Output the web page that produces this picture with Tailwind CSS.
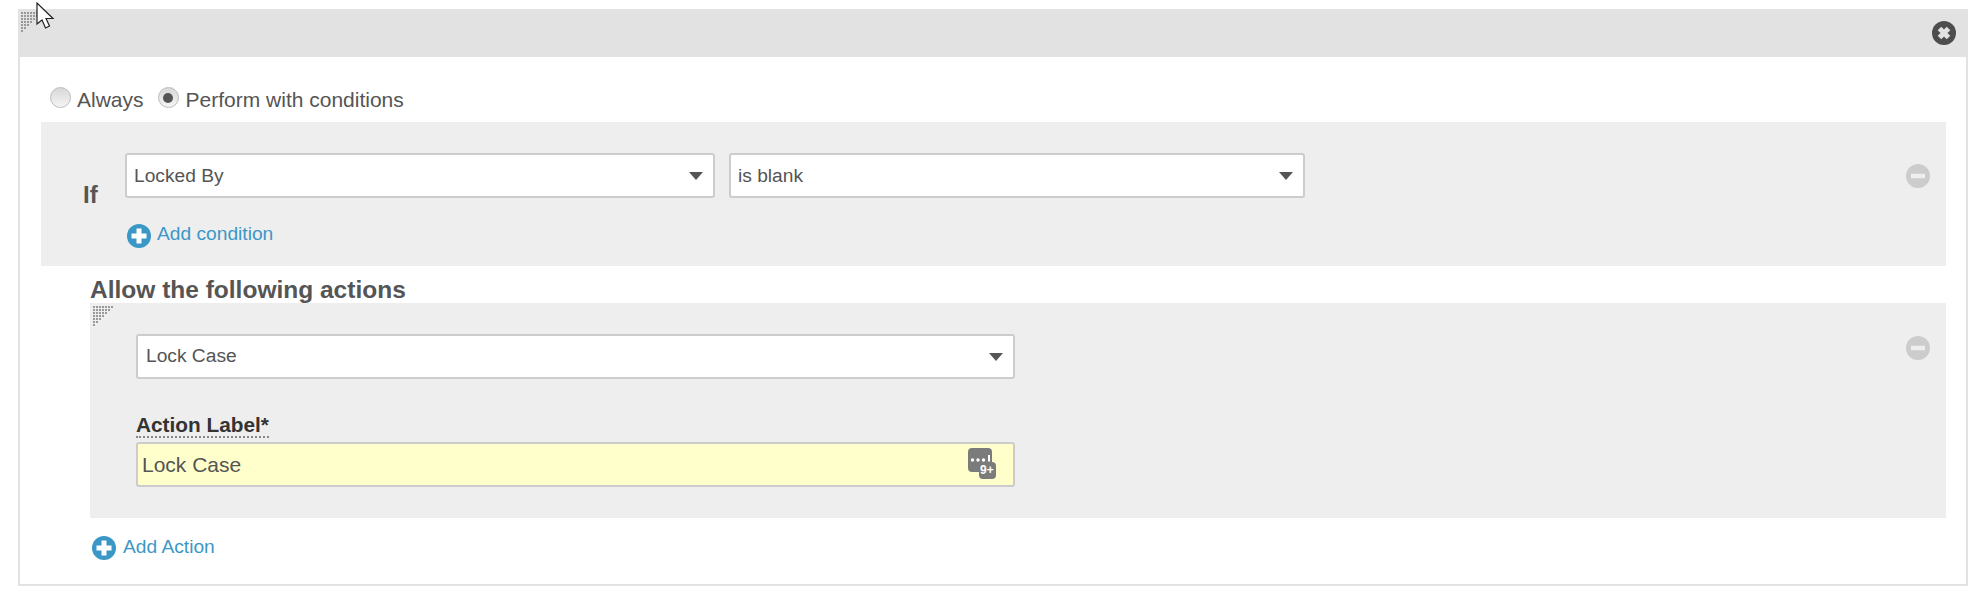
<!DOCTYPE html>
<html lang="en">
<head>
    <meta charset="UTF-8">
    <title>Actions</title>
    <script src="https://cdn.jsdelivr.net/npm/@tailwindcss/browser@4"></script>
</head>
<body class="bg-white font-['Liberation_Sans',Arial,sans-serif] text-[#555]">
    <!-- Cursor -->
    <svg class="absolute left-[36px] top-[2px] z-10" width="19" height="28" viewBox="0 0 19 28">
        <path d="M1 1 L1 22 L6 18 L9.500 26 L13.500 24 L10 16.500 L17 16.500 Z" fill="#fff" stroke="#222" stroke-width="1.200"/>
    </svg>

    <div class="pt-[9px] pl-[18px] w-[1968px]">
        <div class="relative border-2 border-t-0 border-[#e2e2e2] h-[577px]">
            <!-- Header -->
            <div class="relative -mx-[2px] h-[48px] bg-[#e2e2e2] flex items-center justify-end pr-[12px]">
                <svg class="absolute left-[3px] top-[3px]" width="20" height="20" viewBox="0 0 20 20">
                    <g stroke="#999" stroke-width="2" stroke-dasharray="2 1">
                        <path d="M0 1H20M0 4H17M0 7H14M0 10H11M0 13H8M0 16H5M0 19H2"/>
                    </g>
                </svg>
                <svg width="24" height="24" viewBox="0 0 24 24" class="mt-[-1px]">
                    <circle cx="12" cy="12" r="12" fill="#4d4d4d"/>
                    <path d="M7.500 7.500L16.500 16.500M16.500 7.500L7.500 16.500" stroke="#e2e2e2" stroke-width="5"/>
                </svg>
            </div>

            <!-- Radios -->
            <div class="h-[65px] pt-[20px] pl-[30px] flex items-center gap-[10px] text-[21px]">
                <label class="flex items-center gap-[6px]">
                    <span class="w-[21px] h-[21px] rounded-full border border-[#bbb] bg-gradient-to-b from-[#d8d8d8] to-[#f4f4f4] mt-[-4px]"></span>
                    Always
                </label>
                <label class="flex items-center gap-[7px] ml-[4px]">
                    <span class="w-[21px] h-[21px] rounded-full border border-[#bbb] bg-gradient-to-b from-[#d8d8d8] to-[#f4f4f4] mt-[-4px] flex items-center justify-center">
                        <span class="w-[10px] h-[10px] rounded-full bg-[#555]"></span>
                    </span>
                    Perform with conditions
                </label>
            </div>

            <!-- If panel -->
            <div class="relative ml-[21px] mr-[20px] h-[144px] bg-[#eee] flex">
                <div class="w-[84px] pl-[42px] pt-[61px] text-[24px] font-bold leading-none">If</div>
                <div class="pt-[31px]">
                    <div class="flex gap-[14px]">
                        <div class="w-[590px] h-[45px] bg-white border-2 border-[#ccc] rounded-[3px] flex items-center justify-between pl-[7px] pr-[10px] pt-[1px] text-[19.200px]">
                            Locked By
                            <span class="w-0 h-0 border-x-[7px] border-x-transparent border-t-[8px] border-t-[#555]"></span>
                        </div>
                        <div class="w-[576px] h-[45px] bg-white border-2 border-[#ccc] rounded-[3px] flex items-center justify-between pl-[7px] pr-[10px] pt-[1px] text-[19.200px]">
                            is blank
                            <span class="w-0 h-0 border-x-[7px] border-x-transparent border-t-[8px] border-t-[#555]"></span>
                        </div>
                    </div>
                    <div class="flex items-center gap-[6px] mt-[22px] text-[19.200px] text-[#3b97c6]">
                        <svg width="24" height="24" viewBox="0 0 24 24" class="ml-[2px] mt-[3px]">
                            <circle cx="12" cy="12" r="12" fill="#3b97c6"/>
                            <path d="M12 4.500V19.500M4.500 12H19.500" stroke="#fff" stroke-width="5"/>
                        </svg>
                        Add condition
                    </div>
                </div>
                <svg class="absolute right-[16px] top-[42px]" width="24" height="24" viewBox="0 0 24 24">
                    <circle cx="12" cy="12" r="12" fill="#ccc"/>
                    <path d="M5 12H19" stroke="#eee" stroke-width="4.500"/>
                </svg>
            </div>

            <!-- Actions -->
            <div class="ml-[70px] mr-[20px]">
                <h2 class="h-[37px] text-[24.500px] font-bold leading-[48px]">Allow the following actions</h2>
                <div class="relative h-[215px] bg-[#eee] pl-[46px] pt-[31px]">
                    <svg class="absolute left-[3px] top-[3px]" width="20" height="20" viewBox="0 0 20 20">
                        <g stroke="#999" stroke-width="2" stroke-dasharray="2 1">
                            <path d="M0 1H20M0 4H17M0 7H14M0 10H11M0 13H8M0 16H5M0 19H2"/>
                        </g>
                    </svg>
                    <svg class="absolute right-[16px] top-[33px]" width="24" height="24" viewBox="0 0 24 24">
                        <circle cx="12" cy="12" r="12" fill="#ccc"/>
                        <path d="M5 12H19" stroke="#eee" stroke-width="4.500"/>
                    </svg>
                    <div class="w-[879px] h-[45px] bg-white border-2 border-[#ccc] rounded-[3px] flex items-center justify-between pl-[8px] pr-[10px] text-[19.200px]">
                        Lock Case
                        <span class="w-0 h-0 border-x-[7px] border-x-transparent border-t-[8px] border-t-[#555]"></span>
                    </div>
                    <div class="mt-[33px] h-[26px] w-fit text-[20.800px] font-bold text-[#333] leading-[26px] border-b-2 border-dotted border-[#888]">Action Label*</div>
                    <div class="relative mt-[4px] w-[879px] h-[45px] bg-[#ffffcc] border-2 border-[#ccc] rounded-[3px] flex items-center pl-[4px] text-[21px]">
                        Lock Case
                        <svg class="absolute right-[17px] top-[4px]" width="28" height="31" viewBox="0 0 28 31">
                            <rect x="0" y="0" width="24" height="24" rx="4" fill="#7b7b7b"/>
                            <rect x="11" y="14" width="17" height="17" rx="4" fill="#7b7b7b"/>
                            <circle cx="4.500" cy="12" r="1.700" fill="#fff"/>
                            <circle cx="10" cy="12" r="1.700" fill="#fff"/>
                            <circle cx="15.500" cy="12" r="1.700" fill="#fff"/>
                            <path d="M21 7V13.500" stroke="#fff" stroke-width="2"/>
                            <text x="12" y="26" font-size="12" font-weight="700" fill="#fff" font-family="Liberation Sans">9+</text>
                        </svg>
                    </div>
                </div>
                <div class="flex items-center gap-[7px] mt-[15px] ml-[2px] text-[19.200px] text-[#3b97c6]">
                    <svg width="24" height="24" viewBox="0 0 24 24" class="mt-[2px]">
                        <circle cx="12" cy="12" r="12" fill="#3b97c6"/>
                        <path d="M12 4.500V19.500M4.500 12H19.500" stroke="#fff" stroke-width="5"/>
                    </svg>
                    Add Action
                </div>
            </div>
        </div>
    </div>
</body>
</html>
